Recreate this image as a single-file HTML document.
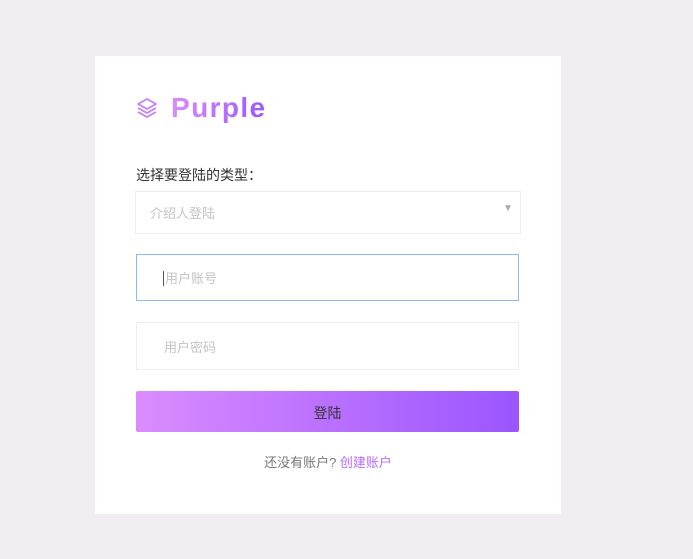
<!DOCTYPE html>
<html><head><meta charset="utf-8"><style>
body{margin:0;width:693px;height:559px;background:#f2edf3;font-family:"Liberation Sans","Noto Sans CJK SC",sans-serif;position:relative;overflow:hidden}
.card{position:absolute;left:95px;top:56px;width:466px;height:458px;background:#fff}
.abs{position:absolute}
.logo{left:171px;top:92px;font:bold 28px "Liberation Sans",sans-serif;color:#b66dff;letter-spacing:1.4px}
.lbl{left:136px;top:165px;font-size:14px;color:#333}
.box{position:absolute;left:136px;width:382px;border:1px solid #ebedf2;box-sizing:border-box;font-size:13px;color:#c3c3c3}
</style></head><body>
<div class="card"></div>
<svg class="abs" style="left:136px;top:97px" width="22" height="22" viewBox="0 0 22 22" fill="none" stroke="#c77dff" stroke-width="1.8" stroke-linejoin="round"><path d="M11 2 L20 7 L11 12 L2 7 Z"/><path d="M2 11 L11 16 L20 11"/><path d="M2 15 L11 20 L20 15"/></svg>
<div class="abs logo" style="background:linear-gradient(90deg,#da8cff,#9a55ff);-webkit-background-clip:text;color:transparent">Purple</div>
<div class="abs lbl">选择要登陆的类型：</div>
<div class="box" style="top:191px;height:43px;left:135px;width:386px"><span class="abs" style="left:14px;top:11px">介绍人登陆</span><span class="abs" style="right:7px;top:11px;font-size:10px;color:#aaa">▼</span></div>
<div class="box" style="top:254px;height:47px;border-color:#8bbcec;width:383px"><span class="abs" style="left:26px;top:13px"><span style="border-left:1px solid #555;margin-right:1px"></span>用户账号</span></div>
<div class="box" style="top:322px;height:48px;width:383px"><span class="abs" style="left:27px;top:14px">用户密码</span></div>
<div class="abs" style="left:136px;top:391px;width:383px;height:41px;background:linear-gradient(90deg,#da8cff,#9a55ff);border-radius:2px;font-size:14px;color:#333;text-align:center;line-height:44px">登陆</div>
<div class="abs" style="left:0;width:656px;text-align:center;top:452px;font-size:13px;color:#777">还没有账户? <span style="color:#b66dff">创建账户</span></div>
</body></html>
